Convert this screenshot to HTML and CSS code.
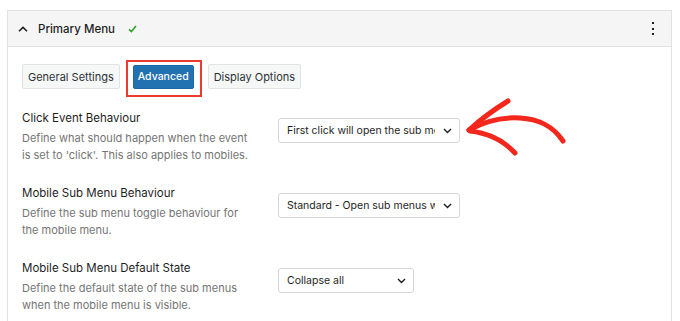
FILE: index.html
```html
<!DOCTYPE html>
<html lang="en">
<head>
    <meta charset="UTF-8">
    <title>Primary Menu - Advanced</title>
    <link rel="stylesheet" href="styles.css">
</head>
<body>
    <div class="panel">
        <div class="panel-header">
            <span class="toggle">
                <svg width="10" height="6" viewBox="0 0 10 6"><path d="M1 5.2 L5 1.4 L9 5.2" fill="none" stroke="#1e1e1e" stroke-width="1.5"/></svg>
            </span>
            <span class="panel-title">Primary Menu</span>
            <span class="saved">
                <svg width="9" height="8" viewBox="0 0 9 8"><path d="M1 4.3 L3.4 6.6 L8 1" fill="none" stroke="#2ea52a" stroke-width="1.6"/></svg>
            </span>
            <span class="more"><i></i><i></i><i></i></span>
        </div>
        <div class="panel-body">
            <div class="tabs">
                <button class="tab">General Settings</button>
                <span class="highlight"><button class="tab active">Advanced</button></span>
                <button class="tab">Display Options</button>
            </div>

            <div class="setting">
                <div class="setting-info">
                    <div class="setting-title">Click Event Behaviour</div>
                    <p class="setting-desc">Define what should happen when the event<br>is set to 'click'. This also applies to mobiles.</p>
                </div>
                <div class="select wide">
                    <span class="select-value">First click will open the sub menu, second click will close</span>
                    <svg width="9" height="6" viewBox="0 0 9 6"><path d="M1 1 L4.5 4.5 L8 1" fill="none" stroke="#1e1e1e" stroke-width="1.4"/></svg>
                </div>
            </div>

            <div class="setting">
                <div class="setting-info">
                    <div class="setting-title">Mobile Sub Menu Behaviour</div>
                    <p class="setting-desc">Define the sub menu toggle behaviour for<br>the mobile menu.</p>
                </div>
                <div class="select wide">
                    <span class="select-value">Standard - Open sub menus will remain open</span>
                    <svg width="9" height="6" viewBox="0 0 9 6"><path d="M1 1 L4.5 4.5 L8 1" fill="none" stroke="#1e1e1e" stroke-width="1.4"/></svg>
                </div>
            </div>

            <div class="setting">
                <div class="setting-info">
                    <div class="setting-title">Mobile Sub Menu Default State</div>
                    <p class="setting-desc">Define the default state of the sub menus<br>when the mobile menu is visible.</p>
                </div>
                <div class="select narrow">
                    <span class="select-value">Collapse all</span>
                    <svg width="9" height="6" viewBox="0 0 9 6"><path d="M1 1 L4.5 4.5 L8 1" fill="none" stroke="#1e1e1e" stroke-width="1.4"/></svg>
                </div>
            </div>
        </div>
    </div>

    <!-- hand drawn annotation arrow -->
    <svg class="arrow" width="680" height="321" viewBox="0 0 680 321">
        <g fill="none" stroke="#f4271c" stroke-width="5" stroke-linecap="round" stroke-linejoin="round">
            <path d="M469 130 C 485 121, 503 117, 520 118 C 538 119, 552 125, 563 141"/>
            <path d="M508 101 C 495 109, 480 120, 469 130"/>
            <path d="M470 131 C 488 133, 504 141, 515 153"/>
        </g>
    </svg>
</body>
</html>
```

FILE: styles.css
```css
body {
    margin: 0;
    padding: 10px 8px 0 7px;
    font-family: Inter, "Noto Sans", sans-serif;
    color: #1e1e1e;
    background-color: #fff;
    overflow: hidden;
}
.panel {
    border: 1px solid #e2e2e2;
    border-bottom: none;
    height: 400px;
}
.panel-header {
    display: flex;
    align-items: center;
    height: 35px;
    padding: 0 17px 0 10px;
    background-color: #f5f5f5;
    border-bottom: 1px solid #e2e2e2;
}
.toggle {
    display: flex;
    width: 10px;
    margin-right: 10px;
}
.panel-title {
    font-size: 11.5px;
    font-weight: 500;
}
.saved {
    display: flex;
    margin-left: 13px;
}
.more {
    margin-left: auto;
    display: flex;
    flex-direction: column;
    gap: 3.5px;
}
.more i {
    display: block;
    width: 2px;
    height: 2px;
    background-color: #1e1e1e;
}
.panel-body {
    padding: 17px 14px 0 14px;
}
.tabs {
    display: flex;
    align-items: flex-start;
    gap: 6px;
}
.tab {
    font-family: inherit;
    font-size: 11px;
    color: #2c3338;
    height: 25px;
    padding: 0 5px;
    background-color: #f6f7f7;
    border: 1px solid #e3e3e3;
    border-radius: 2px;
}
.tab.active {
    height: 24px;
    padding: 0 4px;
    font-size: 10.5px;
    background-color: #2271b1;
    border-color: #1d67a3;
    color: #fff;
    font-weight: 500;
}
.highlight {
    display: block;
    margin: -4px 0 -8px 0;
    padding: 2px 6px 6px 5px;
    border: 2px solid #ee3a2e;
}
.setting {
    display: flex;
    margin-top: 19px;
}
.setting-info {
    width: 256px;
}
.setting-title {
    font-size: 11.5px;
    line-height: 20px;
}
.setting-desc {
    margin: 2px 0 0;
    font-size: 11px;
    line-height: 17px;
    color: #757575;
    white-space: nowrap;
}
.select {
    display: flex;
    align-items: center;
    gap: 8px;
    height: 25px;
    margin-top: 10px;
    padding: 0 7px 0 8px;
    border: 1px solid #d6d6d6;
    border-radius: 3px;
    box-sizing: border-box;
    font-size: 10.5px;
}
.select.wide {
    width: 182px;
}
.select.narrow {
    width: 136px;
}
.select-value {
    flex: 1;
    overflow: hidden;
    white-space: nowrap;
}
.select svg {
    flex: none;
}
.arrow {
    position: absolute;
    left: 0;
    top: 0;
    pointer-events: none;
}
```
